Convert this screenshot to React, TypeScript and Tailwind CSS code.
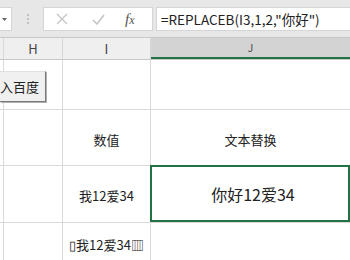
const FONT = "font-['Noto_Sans_CJK_SC','Liberation_Sans',sans-serif]";

function Toolbar() {
  return (
    <div className="flex h-[37px] items-center bg-[#e7e7e7] pt-[1px]">
      <div className="flex h-[24px] w-[12px] items-center justify-start border border-l-0 border-[#d5d5d5] bg-white pl-[2px]">
        <svg width="5" height="3" viewBox="0 0 5 3">
          <path d="M0 0h5L2.5 3z" fill="#666" />
        </svg>
      </div>
      <div className="flex w-[31px] flex-col items-center gap-[2px]">
        <span className="h-[2px] w-[2px] rounded-full bg-[#b5b5b5]" />
        <span className="h-[2px] w-[2px] rounded-full bg-[#b5b5b5]" />
        <span className="h-[2px] w-[2px] rounded-full bg-[#b5b5b5]" />
      </div>
      <div className="flex h-[24px] w-[110px] items-center border border-[#d5d5d5] bg-white">
        <svg className="ml-[12px]" width="12" height="12" viewBox="0 0 12 12">
          <path d="M1 1l10 10M11 1L1 11" stroke="#c3c3c3" strokeWidth="1.3" />
        </svg>
        <svg className="ml-[24px]" width="13" height="11" viewBox="0 0 13 11">
          <path d="M1 6l4 4 7-9" stroke="#c3c3c3" strokeWidth="1.5" fill="none" />
        </svg>
        <span className="ml-[20px] font-['Liberation_Serif',serif] text-[15px] italic leading-none text-[#555]">
          f<span className="text-[12px]">x</span>
        </span>
      </div>
      <div
        className={`ml-[3px] flex h-[24px] flex-1 items-center border border-r-0 border-[#d5d5d5] bg-white pl-[4px] text-[13.5px] text-[#222] ${FONT}`}
      >
        =REPLACEB(I3,1,2,"你好")
      </div>
    </div>
  );
}

function HeaderRow() {
  return (
    <div className={`grid h-[23px] grid-cols-[4px_59px_88px_1fr] border-t border-b border-[#c8c8c8] bg-[#efefef] text-[13px] text-[#444] ${FONT}`}>
      <div className="border-r border-[#d8d8d8]" />
      <div className="flex items-center justify-center border-r border-[#d8d8d8]">H</div>
      <div className="flex items-center justify-center border-r border-[#d8d8d8]">I</div>
      <div className="flex items-center justify-center border-b-2 border-[#217346] bg-[#d3d3d3] text-[11px] text-[#555]">J</div>
    </div>
  );
}

function Row({ h, i, j, jSelected, last }: { h: number; i?: string; j?: string; jSelected?: boolean; last?: boolean }) {
  return (
    <div
      className={`grid grid-cols-[4px_59px_88px_1fr] ${last ? "" : "border-b border-[#dadada]"} ${FONT}`}
      style={{ height: h }}
    >
      <div className="border-r border-[#dadada]" />
      <div className="border-r border-[#dadada]" />
      <div className="flex items-center justify-center border-r border-[#dadada] pt-[4px] text-[13px] text-[#222]">{i}</div>
      <div
        className={`flex items-center justify-center ${jSelected ? "-mt-[1px] -ml-[1px] border-2 border-[#217346] pl-[6px] text-[16px]" : "pt-[4px] text-[13px]"} text-[#222]`}
      >
        {j}
      </div>
    </div>
  );
}

export default function App() {
  return (
    <div className="relative h-[260px] w-[350px] overflow-hidden bg-white">
      <Toolbar />
      <HeaderRow />
      <Row h={50} />
      <Row h={56} i="数值" j="文本替换" />
      <Row h={57} i="我12爱34" j="你好12爱34" jSelected />
      <Row h={40} i="▯我12爱34▥" last />
      <div
        className={`absolute left-0 top-[71px] flex h-[31px] w-[46px] items-center border border-l-0 border-t-[#e0e0e0] border-r-[#7a7a7a] border-b-[#7a7a7a] bg-[#f0f0f0] text-[13px] text-[#222] shadow-[1px_1px_0_#b0b0b0] ${FONT}`}
      >
        <span>入百度</span>
      </div>
    </div>
  );
}
